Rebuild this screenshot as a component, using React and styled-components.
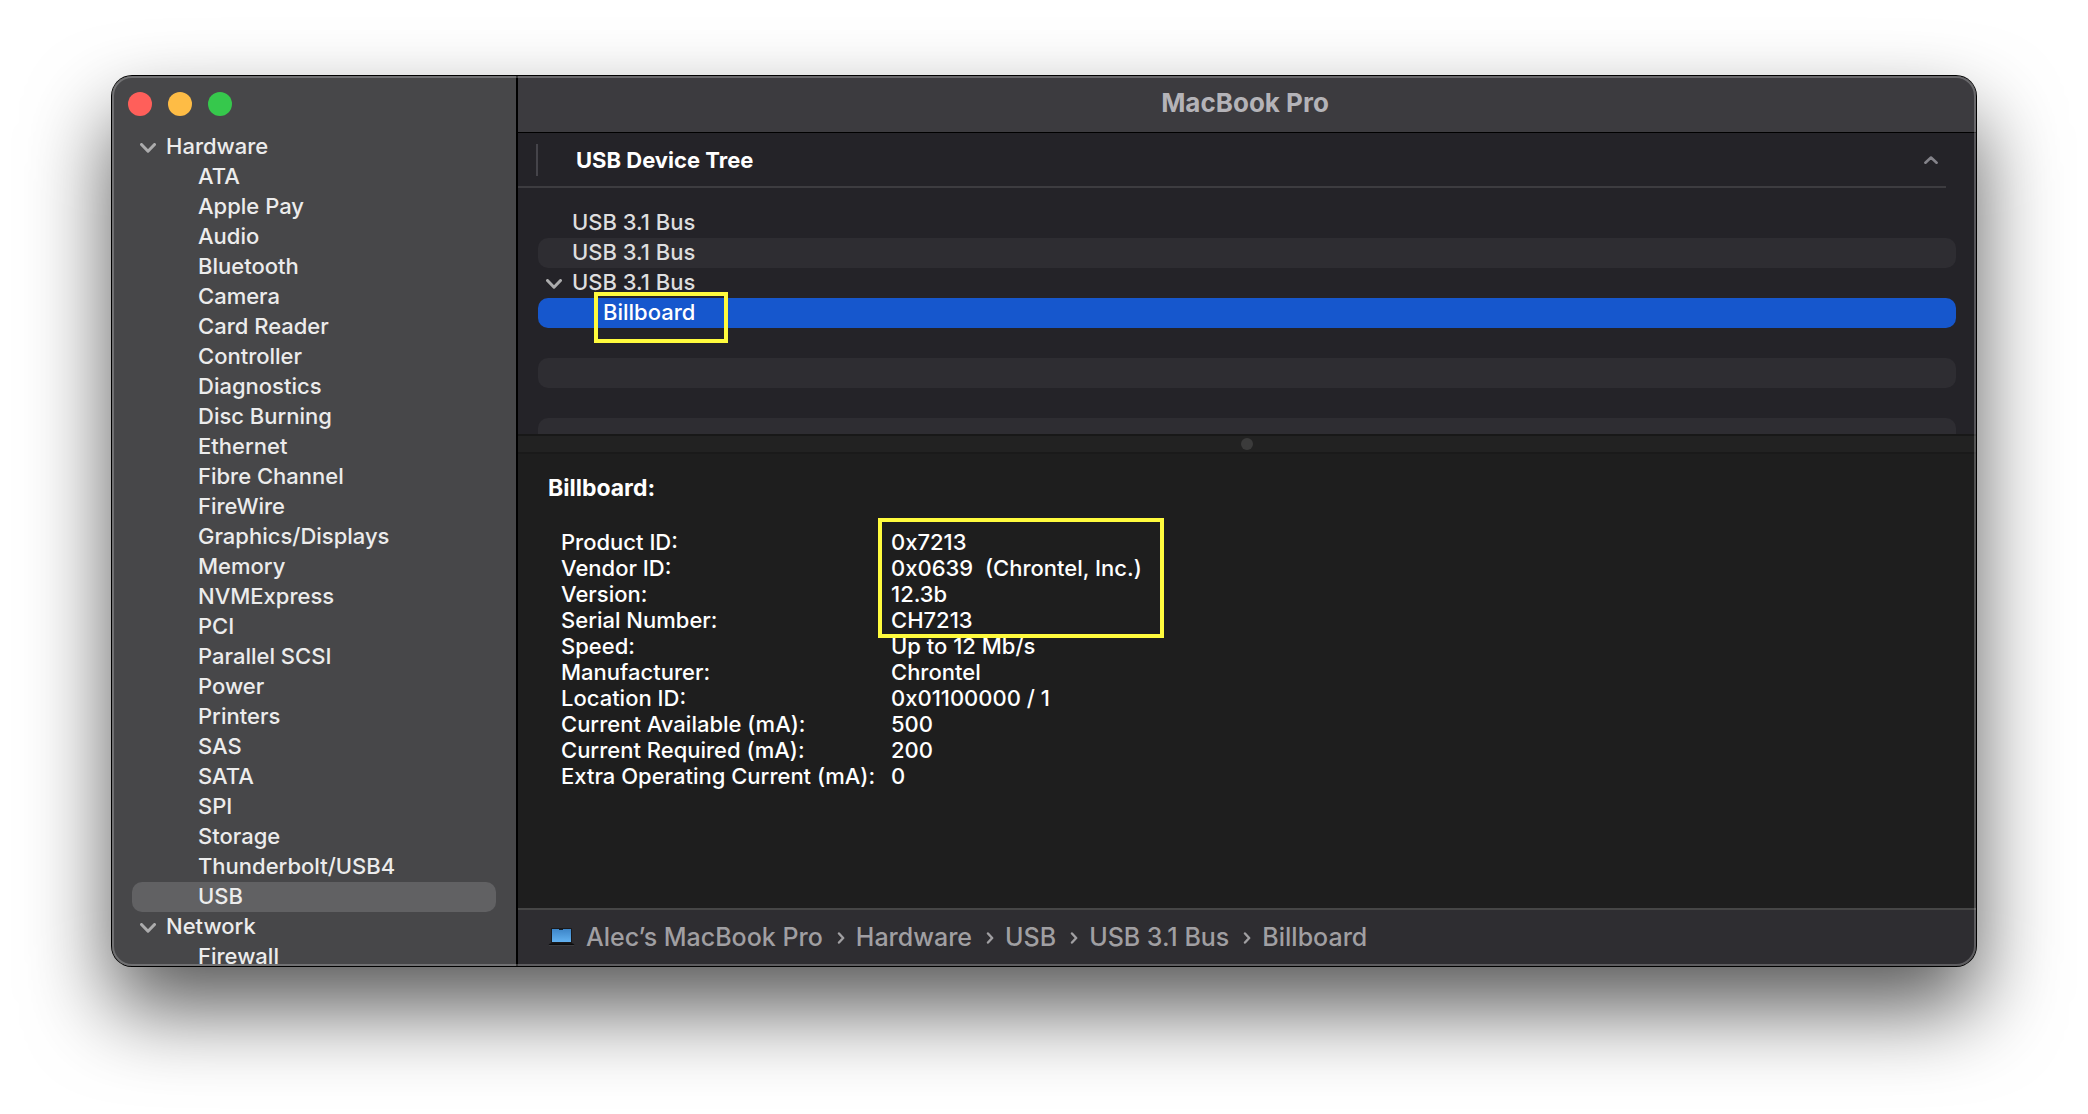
import React from "react";
import styled, { createGlobalStyle } from "styled-components";

const Global = createGlobalStyle`
  * { box-sizing: border-box; }
  html, body { margin: 0; background: #fff; }
  body { font-family: Inter, "Liberation Sans", sans-serif; font-size: 22px; font-weight: 500; line-height: 30px; }
  button, ul, ol, h1, h2 { margin: 0; padding: 0; border: 0; font: inherit; color: inherit; background: none; list-style: none; text-align: left; }
`;

const Page = styled.div`
  height: 100vh;
  padding: 76px 112px 148px;
`;

const Window = styled.div`
  position: relative;
  display: flex;
  height: 100%;
  border-radius: 20px;
  overflow: hidden;
  background: #1e1e1e;
  color: #fff;
  &::after {
    content: "";
    position: absolute;
    inset: 0;
    border-radius: 20px;
    border: 2px solid rgba(255, 255, 255, 0.23);
    pointer-events: none;
  }
`;

const Shadow = styled.div`
  height: 100%;
  border-radius: 20px;
  box-shadow: 0 0 0 1px #000, 0 42px 84px rgba(0, 0, 0, 0.66);
`;

const Sidebar = styled.nav`
  flex: 0 0 406px;
  border-right: 2px solid #000;
  background: #474749;
  font-weight: 450;
  overflow: hidden;
`;

const Lights = styled.div`
  display: flex;
  gap: 16px;
  padding: 16px;
`;

const Light = styled.button`
  width: 24px;
  height: 24px;
  border-radius: 50%;
  background: ${(p) => p.$color};
`;

const SideList = styled.ul`
  padding: 0 20px;
`;

const SideItem = styled.button`
  display: flex;
  align-items: center;
  width: 100%;
  height: 30px;
  padding: 0 0 2px ${(p) => (p.$group ? 8 : 66)}px;
  gap: 10px;
  border-radius: 10px;
  color: #ececec;
  background: ${(p) => (p.$selected ? "#616163" : "transparent")};
  svg { margin-top: 4px; }
`;

const Main = styled.main`
  flex: 1;
  min-width: 0;
  display: flex;
  flex-direction: column;
`;

const TitleBar = styled.header`
  flex: 0 0 57px;
  display: flex;
  align-items: center;
  justify-content: center;
  padding: 0 4px 2px 0;
  border-bottom: 1px solid #000;
  background: #3c3b3f;
`;

const Title = styled.h1`
  font-size: 26px;
  font-weight: 700;
  color: #b4b3b8;
`;

const Tree = styled.section`
  flex: 0 0 301px;
  overflow: hidden;
  background: #242328;
`;

const TreeHeader = styled.button`
  display: flex;
  align-items: center;
  width: calc(100% - 30px);
  height: 55px;
  padding: 0 8px 0 18px;
  border-bottom: 2px solid #3d3c40;
  font-weight: 700;
  color: #fff;
`;

const HeaderTick = styled.span`
  width: 2px;
  height: 32px;
  margin-right: 38px;
  background: #45444a;
`;

const HeaderLabel = styled.span`
  flex: 1;
`;

const TreeRows = styled.ul`
  padding: 20px;
`;

const TreeRow = styled.li`
  position: relative;
  display: flex;
  align-items: center;
  height: 30px;
  padding: 0 0 2px ${(p) => (p.$open ? 8 : p.$nested ? 65 : 34)}px;
  gap: 10px;
  border-radius: 10px;
  color: ${(p) => (p.$selected ? "#fff" : "#dededf")};
  background: ${(p) => (p.$selected ? "#1657cd" : p.$striped ? "#2e2d32" : "transparent")};
  svg { margin-top: 4px; }
`;

const Highlight = styled.span`
  position: absolute;
  left: ${(p) => p.$x}px;
  top: ${(p) => p.$y}px;
  width: ${(p) => p.$w}px;
  height: ${(p) => p.$h}px;
  border: 4px solid #fffb3d;
  z-index: 1;
  pointer-events: none;
`;

const Splitter = styled.div`
  flex: 0 0 20px;
  display: flex;
  align-items: center;
  justify-content: center;
  border-top: 2px solid #181818;
  border-bottom: 2px solid #1a1a1a;
  background: #222;
`;

const Grip = styled.span`
  width: 12px;
  height: 12px;
  border-radius: 50%;
  background: #3b3b3b;
`;

const Details = styled.section`
  flex: 1;
  min-height: 0;
  padding: 19px 30px;
  overflow: hidden;
`;

const DetailTitle = styled.h2`
  font-size: 23px;
  font-weight: 700;
`;

const FieldsWrap = styled.div`
  position: relative;
  padding: 26px 0 0 13px;
`;

const Fields = styled.table`
  border-collapse: collapse;
  line-height: 26px;
  th, td { padding: 0; font-weight: 500; text-align: left; white-space: pre; }
  th { width: 330px; }
`;

const PathBar = styled.footer`
  flex: 0 0 58px;
  display: flex;
  align-items: center;
  padding: 0 30px 2px;
  border-top: 2px solid #464646;
  background: #2e2d31;
  font-size: 25px;
  color: #a09fa2;
`;

const Crumbs = styled.ol`
  display: flex;
  align-items: center;
  margin-left: 10px;
`;

const Crumb = styled.li`
  display: flex;
  align-items: center;
  a { color: inherit; text-decoration: none; }
  svg { margin: 2px 11px 0 14px; }
`;

const Down = () => (
  <svg width="16" height="10" viewBox="0 0 16 10" fill="none" stroke="#acacad" strokeWidth="3" strokeLinecap="round" strokeLinejoin="round" aria-hidden="true">
    <path d="M1.5 1.5 8 8.2l6.5-6.7" />
  </svg>
);
const Up = () => (
  <svg width="14" height="8" viewBox="0 0 14 8" fill="none" stroke="#84838a" strokeWidth="2.6" strokeLinecap="round" strokeLinejoin="round" aria-hidden="true">
    <path d="M1.4 6.7 7 1.5l5.6 5.2" />
  </svg>
);
const Right = () => (
  <svg width="8" height="12" viewBox="0 0 8 12" fill="none" stroke="#a09fa2" strokeWidth="2.4" strokeLinecap="round" strokeLinejoin="round" aria-hidden="true">
    <path d="M2 1.5 6.2 6 2 10.5" />
  </svg>
);
const Laptop = () => (
  <svg width="28" height="20" viewBox="0 0 28 20" aria-hidden="true">
    <defs>
      <linearGradient id="screen" x1="0" y1="0" x2="0" y2="1">
        <stop offset="0" stopColor="#3d85c8" />
        <stop offset="1" stopColor="#62b1f0" />
      </linearGradient>
    </defs>
    <rect x="3" y="1" width="21" height="16" rx="1" fill="#1a1a1c" />
    <rect x="4" y="2" width="19" height="13" fill="url(#screen)" />
    <rect x="11" y="2" width="4" height="1" fill="#16222e" />
    <path d="M2 16.5h23l1.5 1.5H.5z" fill="#0c0c0d" />
    <rect x="1" y="18" width="25" height="1" fill="#3c3c3f" />
  </svg>
);

const groups = [
  ["Hardware", ["ATA", "Apple Pay", "Audio", "Bluetooth", "Camera", "Card Reader", "Controller", "Diagnostics", "Disc Burning", "Ethernet", "Fibre Channel", "FireWire", "Graphics/Displays", "Memory", "NVMExpress", "PCI", "Parallel SCSI", "Power", "Printers", "SAS", "SATA", "SPI", "Storage", "Thunderbolt/USB4", "USB"]],
  ["Network", ["Firewall"]],
];

const fields = [
  ["Product ID:", "0x7213"],
  ["Vendor ID:", "0x0639  (Chrontel, Inc.)"],
  ["Version:", "12.3b"],
  ["Serial Number:", "CH7213"],
  ["Speed:", "Up to 12 Mb/s"],
  ["Manufacturer:", "Chrontel"],
  ["Location ID:", "0x01100000 / 1"],
  ["Current Available (mA):", "500"],
  ["Current Required (mA):", "200"],
  ["Extra Operating Current (mA):", "0"],
];

const path = ["Alec’s MacBook Pro", "Hardware", "USB", "USB 3.1 Bus", "Billboard"];

export default function App() {
  return (
    <Page>
      <Global />
      <Shadow>
        <Window>
          <Sidebar>
            <Lights>
              <Light $color="#ff5f5a" aria-label="Close" />
              <Light $color="#febc45" aria-label="Minimize" />
              <Light $color="#36c84c" aria-label="Zoom" />
            </Lights>
            <SideList>
              {groups.map(([name, items]) => (
                <li key={name}>
                  <SideItem $group><Down />{name}</SideItem>
                  <ul>
                    {items.map((item) => (
                      <li key={item}><SideItem $selected={item === "USB"}>{item}</SideItem></li>
                    ))}
                  </ul>
                </li>
              ))}
            </SideList>
          </Sidebar>
          <Main>
            <TitleBar><Title>MacBook Pro</Title></TitleBar>
            <Tree>
              <TreeHeader><HeaderTick /><HeaderLabel>USB Device Tree</HeaderLabel><Up /></TreeHeader>
              <TreeRows>
                <TreeRow>USB 3.1 Bus</TreeRow>
                <TreeRow $striped>USB 3.1 Bus</TreeRow>
                <TreeRow $open><Down />USB 3.1 Bus</TreeRow>
                <TreeRow $nested $selected>Billboard<Highlight $x={56} $y={-6} $w={134} $h={51} /></TreeRow>
                <TreeRow />
                <TreeRow $striped />
                <TreeRow />
                <TreeRow $striped />
              </TreeRows>
            </Tree>
            <Splitter><Grip /></Splitter>
            <Details>
              <DetailTitle>Billboard:</DetailTitle>
              <FieldsWrap>
                <Fields>
                  <tbody>
                    {fields.map(([k, v]) => (
                      <tr key={k}><th scope="row">{k}</th><td>{v}</td></tr>
                    ))}
                  </tbody>
                </Fields>
                <Highlight $x={330} $y={15} $w={286} $h={120} />
              </FieldsWrap>
            </Details>
            <PathBar>
              <Laptop />
              <Crumbs>
                {path.map((p, i) => (
                  <Crumb key={p}>{i > 0 && <Right />}<a href="#">{p}</a></Crumb>
                ))}
              </Crumbs>
            </PathBar>
          </Main>
        </Window>
      </Shadow>
    </Page>
  );
}
